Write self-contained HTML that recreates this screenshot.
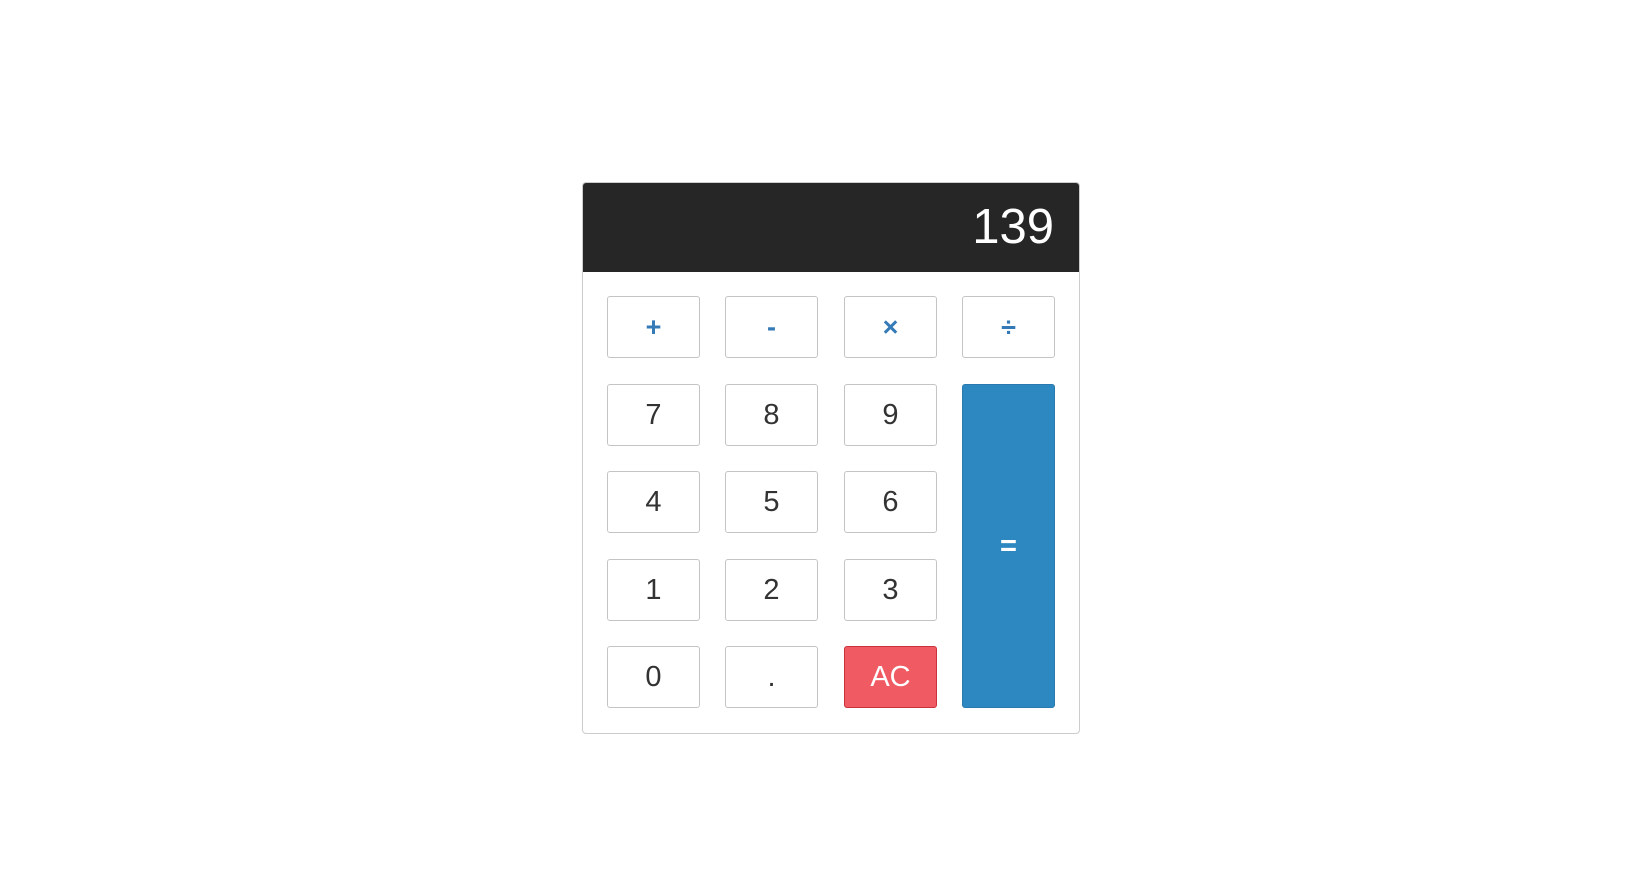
<!DOCTYPE html>
<html><head><style>
body{margin:0;background:#fff;font-family:"Liberation Sans",Arial,sans-serif;}
.panel{position:absolute;left:582px;top:182px;width:496px;height:550px;border:1px solid #ccc;border-radius:4px;overflow:hidden;}
.disp{position:absolute;left:0;top:0;width:496px;height:89px;background:#262626;color:#fff;font-size:49px;text-align:right;box-sizing:border-box;padding-right:25px;line-height:89px;}
.b{position:absolute;width:93px;height:62px;box-sizing:border-box;border:1px solid #c4c4c4;border-radius:3px;background:#fff;color:#333;font-size:29px;display:flex;align-items:center;justify-content:center;}
.op{color:#337ab7;font-size:27px;font-weight:bold;}
.ac{background:#f05a63;border-color:#c9323c;color:#fff;}
.eq{background:#2d87c0;border-color:#2a7ab0;color:#fff;font-weight:bold;}
</style></head><body>
<div class="panel">
<div class="disp">139</div>
</div>
<div class="b op" style="left:607px;top:296px">+</div>
<div class="b op" style="left:725px;top:296px">-</div>
<div class="b op" style="left:844px;top:296px">×</div>
<div class="b op" style="left:962px;top:296px">÷</div>
<div class="b" style="left:607px;top:384px">7</div>
<div class="b" style="left:725px;top:384px">8</div>
<div class="b" style="left:844px;top:384px">9</div>
<div class="b" style="left:607px;top:471px">4</div>
<div class="b" style="left:725px;top:471px">5</div>
<div class="b" style="left:844px;top:471px">6</div>
<div class="b" style="left:607px;top:559px">1</div>
<div class="b" style="left:725px;top:559px">2</div>
<div class="b" style="left:844px;top:559px">3</div>
<div class="b" style="left:607px;top:646px">0</div>
<div class="b" style="left:725px;top:646px">.</div>
<div class="b ac" style="left:844px;top:646px">AC</div>
<div class="b eq" style="left:962px;top:384px;height:324px">=</div>
</body></html>
